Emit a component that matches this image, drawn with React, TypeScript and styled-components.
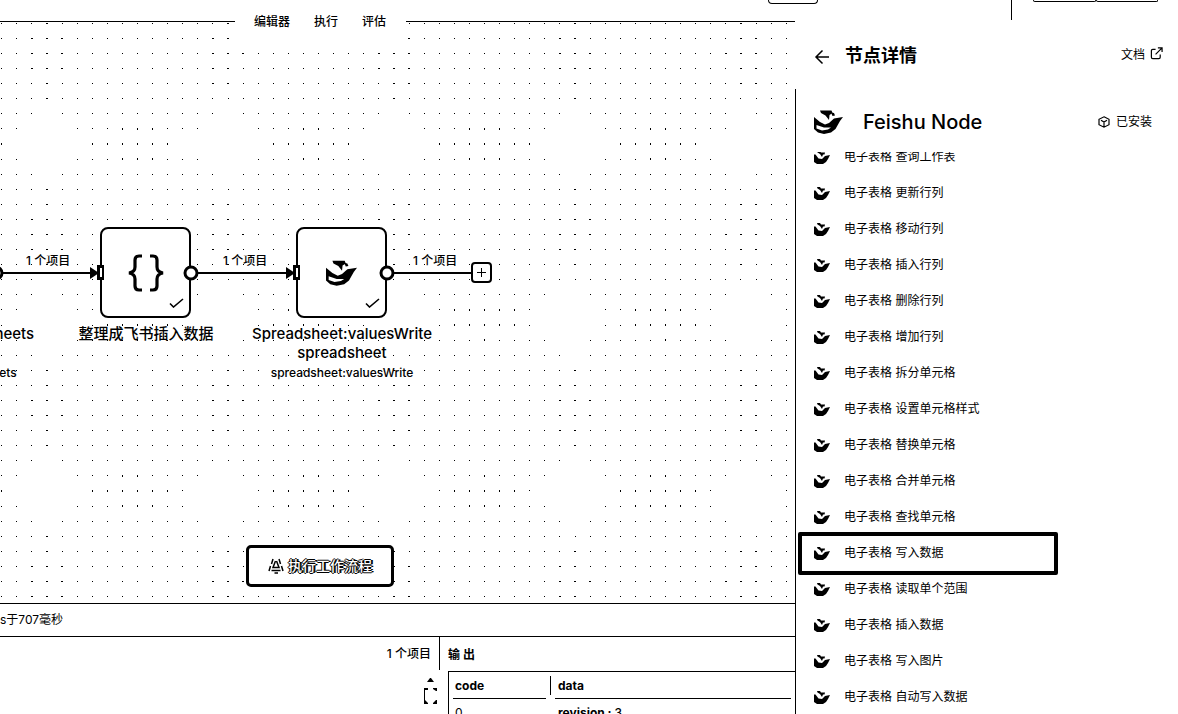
import React from 'react';
import styled, { createGlobalStyle, css } from 'styled-components';

const Global = createGlobalStyle`
  *, *::before, *::after { box-sizing: border-box; }
  body {
    margin: 0;
    background: #fff;
    color: #000;
    font-family: Inter, "Noto Sans CJK SC", sans-serif;
    font-size: 12px;
    line-height: 18px;
  }
  h1, h2, ul, p { margin: 0; padding: 0; }
  button { font: inherit; color: inherit; background: none; border: 0; padding: 0; }
  a { color: inherit; text-decoration: none; }
`;

const Page = styled.div`
  display: flex;
  flex-direction: column;
  height: 100vh;
  overflow: hidden;
`;

const TopBar = styled.header`
  display: flex;
  justify-content: flex-end;
  align-items: flex-start;
  height: 21px;
  flex: none;
  padding-right: 20px;
`;

const TopButton = styled.button<{ $width: number; $height: number }>`
  width: ${(p) => p.$width}px;
  height: ${(p) => p.$height}px;
  border: 1px solid #000;
  border-top: 0;
  border-radius: 0 0 4px 4px;
`;

const TopDivider = styled.div`
  width: 1px;
  height: 20px;
  margin: 0 21px 0 193px;
  background: #000;
`;

const TopGroup = styled.div`
  display: flex;
`;

const Body = styled.div`
  display: flex;
  flex: 1;
  min-height: 0;
`;

const Main = styled.main`
  display: flex;
  flex-direction: column;
  flex: 1;
  min-width: 0;
`;

const Canvas = styled.section`
  position: relative;
  flex: 1;
  min-height: 0;
  border-top: 1px solid #000;
`;

const Surface = styled.div`
  position: absolute;
  inset: 0;
  overflow: hidden;
`;

const Drawing = styled.svg`
  position: absolute;
  left: 0;
  top: 0;
  width: 100%;
  height: 100%;
`;

const Tabs = styled.nav`
  position: absolute;
  left: 235px;
  top: -22px;
  display: flex;
  gap: 24px;
  height: 46px;
  align-items: center;
  background: #fff;
  padding: 0 20px 2px 19px;
`;

const Tab = styled.button`
  font-weight: 500;
`;

const NodeBox = styled.div<{ $x: number }>`
  position: absolute;
  left: ${(p) => p.$x}px;
  top: 205px;
  width: 91px;
  height: 91px;
  border: 2px solid #000;
  border-radius: 8px;
  background: #fff;
  display: grid;
  place-items: center;
`;

const Check = styled.svg`
  position: absolute;
  right: 5px;
  bottom: 8px;
`;

const Caption = styled.div<{ $x: number }>`
  position: absolute;
  left: ${(p) => p.$x}px;
  top: 302px;
  width: 200px;
  margin-left: -100px;
  text-align: center;
  font-size: 15px;
  line-height: 19px;
  font-weight: 500;
`;

const SubCaption = styled.p`
  padding-top: 1px;
  font-size: 12px;
  font-weight: 500;
`;

const EdgeLabel = styled.span<{ $x: number }>`
  position: absolute;
  left: ${(p) => p.$x}px;
  top: 230px;
  font-weight: 500;
  white-space: nowrap;
`;

const AddButton = styled.button`
  position: absolute;
  left: 471px;
  top: 240px;
  width: 21px;
  height: 21px;
  border: 2px solid #000;
  border-radius: 4px;
  background: #fff;
  display: grid;
  place-items: center;
`;

const RunButton = styled.button`
  position: absolute;
  left: 246px;
  bottom: 16px;
  width: 148px;
  height: 42px;
  display: flex;
  align-items: center;
  justify-content: center;
  gap: 4px;
  border: 3px solid #000;
  border-radius: 5px;
  background: #fff;
  font-size: 14px;
`;

const RunText = styled.span`
  color: #fff;
  font-weight: 500;
  text-shadow: 1px 0 0 #000, -1px 0 0 #000, 0 1px 0 #000, 0 -1px 0 #000, 2px 0 0 #000;
`;

const LogBar = styled.div`
  flex: none;
  height: 34px;
  border-top: 1px solid #000;
  border-bottom: 1px solid #000;
  display: flex;
  align-items: center;
`;

const Output = styled.section`
  flex: none;
  display: flex;
  height: 77px;
  overflow: hidden;
`;

const InputSide = styled.div`
  width: 440px;
  display: flex;
  flex-direction: column;
  align-items: flex-end;
  gap: 8px;
`;

const ItemCount = styled.div`
  height: 33px;
  display: flex;
  align-items: center;
  padding-right: 8px;
  border-right: 1px solid #000;
  font-weight: 500;
`;

const Braces = styled.svg`
  margin-right: 2px;
`;

const OutputSide = styled.div`
  flex: 1;
  min-width: 0;
  display: flex;
  flex-direction: column;
`;

const OutputTitle = styled.h2`
  flex: none;
  height: 34px;
  padding: 9px 8px 0;
  font-size: 12px;
  line-height: 18px;
  font-weight: 700;
  letter-spacing: 3px;
`;

const TableFrame = styled.div`
  flex: none;
  margin-left: 8px;
  border-top: 1px solid #000;
  border-left: 1px solid #000;
  padding-left: 4px;
`;

const DataTable = styled.table`
  width: 100%;
  border-collapse: separate;
  border-spacing: 0;
  table-layout: fixed;
  text-align: left;
`;

const CodeCol = styled.col`
  width: 97px;
`;

const cell = css`
  position: relative;
  height: 27px;
  padding: 0 0 0 2px;
  & + & { padding-left: 8px; }
`;

const HeadCell = styled.th`
  ${cell}
  font-weight: 700;
  &::after {
    content: '';
    position: absolute;
    left: 0;
    right: 4px;
    bottom: 0;
    height: 1px;
    background: #000;
  }
  & + &::before {
    content: '';
    position: absolute;
    left: 0;
    top: 4px;
    bottom: 4px;
    width: 1px;
    background: #000;
  }
  & + &::after { left: 5px; }
`;

const Cell = styled.td<{ $strong?: boolean }>`
  ${cell}
  font-weight: ${(p) => (p.$strong ? 700 : 400)};
  & + &::before {
    content: '';
    position: absolute;
    left: 0;
    top: 4px;
    bottom: 0;
    width: 1px;
    background: #000;
  }
`;

const Value = styled.span`
  font-weight: 500;
`;

const Side = styled.aside`
  flex: none;
  width: 383px;
  display: flex;
  flex-direction: column;
`;

const SideHead = styled.div`
  flex: none;
  display: flex;
  align-items: center;
  height: 68px;
  padding: 0 15px 0 19px;
`;

const BackButton = styled.button`
  display: flex;
  margin: 3px 15px 0 0;
`;

const SideTitle = styled.h1`
  flex: 1;
  padding-top: 2px;
  font-size: 18px;
  line-height: 24px;
  font-weight: 700;
`;

const DocLink = styled.a`
  display: flex;
  align-items: center;
  gap: 5px;
  svg { margin-bottom: 4px; }
`;

const SideBody = styled.div`
  flex: 1;
  min-height: 0;
  display: flex;
  flex-direction: column;
  border-left: 1px solid #000;
`;

const Brand = styled.div`
  flex: none;
  display: flex;
  align-items: center;
  height: 63px;
  padding: 2px 26px 0 18px;
`;

const BrandName = styled.h2`
  flex: 1;
  margin-left: 20px;
  font-size: 20px;
  line-height: 28px;
  font-weight: 500;
`;

const Installed = styled.span`
  display: flex;
  align-items: center;
  gap: 6px;
`;

const Scroller = styled.div`
  flex: 1;
  min-height: 0;
  overflow: hidden;
`;

const Actions = styled.ul`
  list-style: none;
  margin-top: -13px;
`;

const Action = styled.li<{ $selected?: boolean }>`
  position: relative;
  height: 36px;
  ${(p) =>
    p.$selected &&
    css`
      &::after {
        content: '';
        position: absolute;
        left: 2px;
        top: -3px;
        width: 260px;
        height: 43px;
        border: 4px solid #000;
        border-radius: 2px;
        pointer-events: none;
      }
    `}
`;

const ActionButton = styled.button`
  display: flex;
  align-items: center;
  gap: 14px;
  width: 100%;
  height: 36px;
  padding-left: 18px;
  text-align: left;
`;

const PITCH = 15.0862;
const ORIGIN_X = 1.74;
const ORIGIN_Y = 1.31;
const VISIBLE = 0.365;

/* Snaps every grid dot to whole pixels, keeping those a dot covers enough. */
function gridPath(cols: number, rows: number) {
  let d = '';
  const share = (p: number, c: number) => Math.max(0, 1 - Math.abs(p + 0.5 - c));
  for (let j = 0; j < rows; j++) {
    for (let i = 0; i < cols; i++) {
      const cx = ORIGIN_X + i * PITCH;
      const cy = ORIGIN_Y + j * PITCH;
      for (let y = Math.floor(cy) - 1; y <= Math.floor(cy) + 1; y++) {
        for (let x = Math.floor(cx) - 1; x <= Math.floor(cx) + 1; x++) {
          if (share(x, cx) * share(y, cy) > VISIBLE) d += `M${x} ${y}h1v1h-1z`;
        }
      }
    }
  }
  return d;
}

const GRID = gridPath(140, 80);

const Bird = ({ size }: { size: number }) => (
  <svg width={size} height={Math.round(size * 0.83)} viewBox="0 0 29 24" aria-hidden="true">
    <path d="M6 0.500H17.500L18.500 3L15.500 5L15 10L11.500 5.500L7 3Z" />
    <path
      fillRule="evenodd"
      d="M0 7L6 12L11 14.500L15 13L20 8.500L29 7L26 11L21.500 19L17 22.500L10 24L4 22.500L0 19ZM2.500 15V18.500L8 20.500L14 19.500L17 17.500L10 17.500Z"
    />
    <path d="M17 2.500L20 3L21 5.500L18.500 6Z" />
  </svg>
);

const SmallBird = () => (
  <svg width="16" height="13" viewBox="0 0 16 13" aria-hidden="true">
    <path d="M3 0H6L7 1.500H11L10.500 3.500H9L8 6L6 3L3.500 1.500Z" />
    <path d="M0 3.500H1.500L4.500 7.500L8 8L11 5L16 4L14 8L12 11L9 13H3L0 11Z" />
  </svg>
);

const CheckMark = () => (
  <Check width="15" height="10" viewBox="0 0 15 10" fill="none" stroke="#000" strokeWidth="1.600">
    <path d="M1 5.500L4.500 9L14 1" />
  </Check>
);

const Port = ({ x }: { x: number }) => (
  <g>
    <path d={`M${x - 10} 245L${x - 1} 251L${x - 10} 257Z`} />
    <rect x={x - 3} y="243" width="7" height="15" />
    <rect x={x} y="246" width="2" height="9" fill="#fff" />
  </g>
);

const actions = [
  '查询工作表', '更新行列', '移动行列', '插入行列', '删除行列', '增加行列', '拆分单元格', '设置单元格样式',
  '替换单元格', '合并单元格', '查找单元格', '写入数据', '读取单个范围', '插入数据', '写入图片', '自动写入数据',
];

export default function App() {
  return (
    <Page>
      <Global />
      <TopBar>
        <TopButton $width={50} $height={4} aria-label="分享" />
        <TopDivider />
        <TopGroup>
          <TopButton $width={63} $height={2} aria-label="收藏" />
          <TopButton $width={62} $height={2} aria-label="更多" />
        </TopGroup>
      </TopBar>
      <Body>
        <Main>
          <Canvas>
            <Surface>
              <Drawing shapeRendering="crispEdges" aria-hidden="true">
                <path d={GRID} />
              </Drawing>
              <NodeBox $x={100}>
                <svg width="38" height="38" viewBox="0 0 38 38" fill="none" stroke="#000" strokeWidth="3.200">
                  <path d="M15 2H12Q8 2 8 6V13Q8 18 2 19Q8 20 8 25V32Q8 36 12 36H15" />
                  <path d="M23 2H26Q30 2 30 6V13Q30 18 36 19Q30 20 30 25V32Q30 36 26 36H23" />
                </svg>
                <CheckMark />
              </NodeBox>
              <NodeBox $x={296}>
                <Bird size={31} />
                <CheckMark />
              </NodeBox>
              <Drawing aria-hidden="true">
                <path d="M0 250H92V252H0ZM197 250H288V252H197ZM393 250H472V252H393Z" />
                <Port x={100} />
                <Port x={296} />
                <g fill="#fff" stroke="#000" strokeWidth="3">
                  <circle cx="-4" cy="251" r="6" />
                  <circle cx="191" cy="251" r="6" />
                  <circle cx="387" cy="251" r="6" />
                </g>
              </Drawing>
              <EdgeLabel $x={26}>1 个项目</EdgeLabel>
              <EdgeLabel $x={223}>1 个项目</EdgeLabel>
              <EdgeLabel $x={413}>1 个项目</EdgeLabel>
              <AddButton aria-label="添加节点">
                <svg width="9" height="9" viewBox="0 0 9 9">
                  <path d="M4 0H5V4H9V5H5V9H4V5H0V4H4Z" />
                </svg>
              </AddButton>
              <Caption $x={-50}>
                Spreadsheet:getSheets
                <br />
                <br />
                <SubCaption>spreadsheet:getSheets</SubCaption>
              </Caption>
              <Caption $x={146}>整理成飞书插入数据</Caption>
              <Caption $x={342}>
                Spreadsheet:valuesWrite
                <br />
                spreadsheet
                <SubCaption>spreadsheet:valuesWrite</SubCaption>
              </Caption>
            </Surface>
            <Tabs>
              <Tab>编辑器</Tab>
              <Tab>执行</Tab>
              <Tab>评估</Tab>
            </Tabs>
            <RunButton>
              <svg width="16" height="16" viewBox="0 0 16 16" fill="none" stroke="#000" strokeWidth="1.500">
                <path d="M5 1L3.500 6M11 1L12.500 6M2.500 8L1 13M13.500 8L15 13M7.500 3L5 9.500H11L8.500 3M3.500 12.500H12.500M6.500 15H10" />
              </svg>
              <RunText>执行工作流程</RunText>
            </RunButton>
          </Canvas>
          <LogBar>s于707毫秒</LogBar>
          <Output>
            <InputSide>
              <ItemCount>1 个项目</ItemCount>
              <Braces width="14" height="30" viewBox="0 0 14 30">
                <path d="M3 4L6 0H7L10 4ZM0 12V10H4V12H1V22L4 25V26H0ZM9 10H13V13H12L9 11ZM13 22V26H9V25L12 22Z" />
              </Braces>
            </InputSide>
            <OutputSide>
              <OutputTitle>输出</OutputTitle>
              <TableFrame>
                <DataTable>
                  <colgroup>
                    <CodeCol />
                    <col />
                  </colgroup>
                  <thead>
                    <tr>
                      <HeadCell>code</HeadCell>
                      <HeadCell>data</HeadCell>
                    </tr>
                  </thead>
                  <tbody>
                    <tr>
                      <Cell>0</Cell>
                      <Cell $strong>
                        revision : <Value>3</Value>
                      </Cell>
                    </tr>
                  </tbody>
                </DataTable>
              </TableFrame>
            </OutputSide>
          </Output>
        </Main>
        <Side>
          <SideHead>
            <BackButton aria-label="返回">
              <svg width="16" height="16" viewBox="0 0 16 16" fill="none" stroke="#000" strokeWidth="1.500">
                <path d="M8.500 1.500L2 8L8.500 14.500M2 8H15" />
              </svg>
            </BackButton>
            <SideTitle>节点详情</SideTitle>
            <DocLink href="#docs">
              文档
              <svg width="13" height="13" viewBox="0 0 14 14" fill="none" stroke="#000" strokeWidth="1.300">
                <path d="M6 2.500H3Q1.500 2.500 1.500 4V11Q1.500 12.500 3 12.500H9.500Q11 12.500 11 11V8M8.500 1H13V5.500M13 1L6 8" />
              </svg>
            </DocLink>
          </SideHead>
          <SideBody>
            <Brand>
              <Bird size={29} />
              <BrandName>Feishu Node</BrandName>
              <Installed>
                <svg width="12" height="12" viewBox="0 0 12 12" fill="none" stroke="#000" strokeWidth="1.200">
                  <path d="M6 0.800L11 3.300V8.700L6 11.200L1 8.700V3.300ZM3 4.300L6 6L9 4.300M6 6V11" />
                </svg>
                已安装
              </Installed>
            </Brand>
            <Scroller>
              <Actions>
                {actions.map((name) => (
                  <Action key={name} $selected={name === '写入数据'}>
                    <ActionButton>
                      <SmallBird />
                      <span>电子表格 {name}</span>
                    </ActionButton>
                  </Action>
                ))}
              </Actions>
            </Scroller>
          </SideBody>
        </Side>
      </Body>
    </Page>
  );
}
